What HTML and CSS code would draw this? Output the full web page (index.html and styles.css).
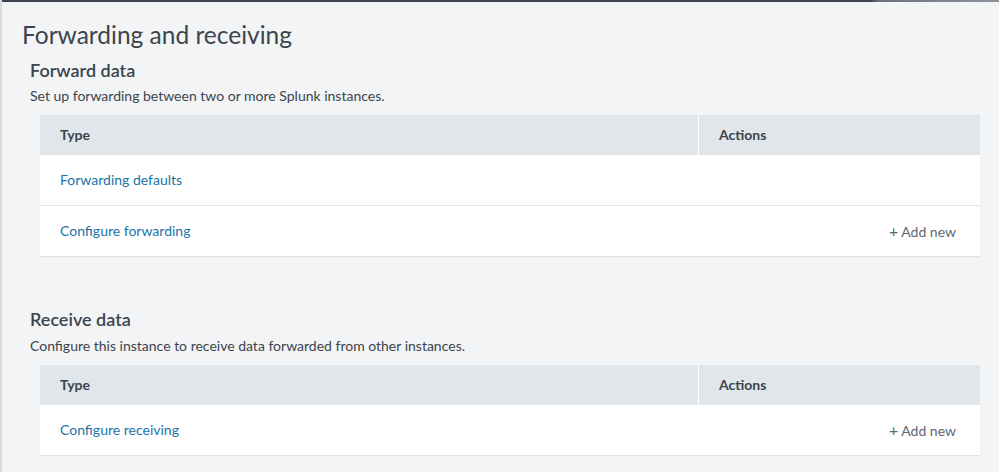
FILE: index.html
```html
<!DOCTYPE html>
<html lang="en">
<head>
<meta charset="utf-8">
<title>Forwarding and receiving</title>
<link rel="stylesheet" href="styles.css">
</head>
<body>
<div class="topbar"></div>
<main class="page">
  <h1 class="page-title">Forwarding and receiving</h1>

  <section class="section">
    <h2 class="section-title">Forward data</h2>
    <p class="section-desc">Set up forwarding between two or more Splunk instances.</p>
    <div class="table">
      <div class="row head">
        <div class="cell type">Type</div>
        <div class="cell actions">Actions</div>
      </div>
      <div class="row">
        <div class="cell type"><a class="link" href="#">Forwarding defaults</a></div>
        <div class="cell actions"></div>
      </div>
      <div class="row">
        <div class="cell type"><a class="link" href="#">Configure forwarding</a></div>
        <div class="cell actions"><a class="add" href="#"><span class="plus">+</span> Add new</a></div>
      </div>
    </div>
  </section>

  <section class="section second">
    <h2 class="section-title">Receive data</h2>
    <p class="section-desc">Configure this instance to receive data forwarded from other instances.</p>
    <div class="table">
      <div class="row head">
        <div class="cell type">Type</div>
        <div class="cell actions">Actions</div>
      </div>
      <div class="row">
        <div class="cell type"><a class="link" href="#">Configure receiving</a></div>
        <div class="cell actions"><a class="add" href="#"><span class="plus">+</span> Add new</a></div>
      </div>
    </div>
  </section>
</main>
</body>
</html>
```
FILE: styles.css
```css
html, body {
  margin: 0;
  padding: 0;
  background: #f2f4f5;
}
body {
  font-family: Lato, "Open Sans", "Liberation Sans", sans-serif;
  color: #3c444d;
  height: 472px;
  overflow: hidden;
  border-left: 2px solid #dadde0;
  box-sizing: border-box;
}
.topbar {
  height: 2px;
  background: linear-gradient(to right, #3c444d 0, #3c444d 87%, #6b7380 88%, #8c939c 100%);
}
.page {
  padding: 0 19px 0 20px;
}
.page-title {
  margin: 18px 0 0 0;
  font-size: 24.5px;
  line-height: 30px;
  font-weight: 400;
}
.section {
  padding-left: 8px;
}
.section-title {
  margin: 9px 0 0 0;
  font-size: 18px;
  line-height: 22px;
  font-weight: 600;
}
.section-desc {
  margin: 6px 0 0 0;
  font-size: 14px;
  line-height: 18px;
}
.second {
  margin-top: 52px;
}
.second .section-title {
  margin-top: 0;
}
.second .section-desc {
  margin-top: 7px;
}
.table {
  margin: 10px 0 0 10px;
  background: #fff;
  box-shadow: 0 1px 1px rgba(0, 0, 0, 0.08);
}
.row {
  display: flex;
  height: 50px;
  align-items: center;
  border-bottom: 1px solid #e1e6eb;
  font-size: 14px;
}
.row:last-child {
  border-bottom: none;
}
.row.head {
  height: 40px;
  background: #e1e6eb;
  font-weight: 700;
  border-bottom: none;
  align-items: stretch;
}
.cell {
  padding: 0 20px 2px 20px;
  display: flex;
  align-items: center;
}
.cell.type {
  width: 70%;
  box-sizing: border-box;
}
.cell.actions {
  flex: 1;
}
.head .cell.actions {
  border-left: 1px solid #fff;
}
.row:not(.head) .cell.actions {
  justify-content: flex-end;
  padding-right: 24px;
}
.link {
  color: #1a73a8;
  text-decoration: none;
}
.add {
  color: #5c6773;
  text-decoration: none;
}
.plus {
  font-size: 16px;
}
```
